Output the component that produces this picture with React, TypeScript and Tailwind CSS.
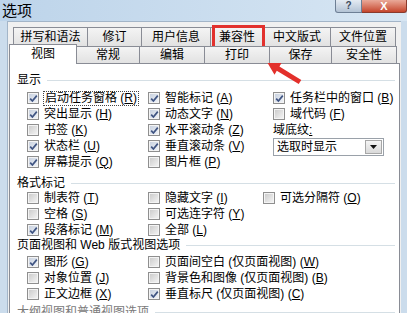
import clsx from "clsx";

interface Item {
  t: string;
  k: string;
  on: boolean;
  focus?: boolean;
}

function Box({ on }: { on: boolean }) {
  return (
    <span className="relative flex h-[12px] w-[12px] shrink-0 items-center justify-center border border-[#8f8f8f] bg-[#f4f4f4]">
      <span
        className={clsx(
          "h-[8px] w-[8px] bg-gradient-to-br",
          on ? "from-[#c9d2e0] to-[#eef1f6]" : "from-[#cdcdcd] to-[#f2f2f2]"
        )}
      />
      {on && (
        <svg className="absolute left-[1px] top-[1px]" width="9" height="9" viewBox="0 0 9 9">
          <path d="M1.2 4.6 L3.4 7 L7.8 1.6" stroke="#3f5482" strokeWidth="1.7" fill="none" />
        </svg>
      )}
    </span>
  );
}

function Check({ item }: { item: Item }) {
  return (
    <div className="flex h-[16px] items-center gap-[5px] whitespace-nowrap">
      <Box on={item.on} />
      <span
        className={clsx(
          "leading-[13px]",
          item.focus && "-ml-px border border-dotted border-[#444] px-[1px]"
        )}
      >
        {item.t} (<u>{item.k}</u>)
      </span>
    </div>
  );
}

function Header({ title, className }: { title: React.ReactNode; className?: string }) {
  return (
    <div className={clsx("flex h-[14px] items-center pl-[7px] pr-[4px] whitespace-nowrap", className)}>
      <span>{title}</span>
      <span className="ml-[6px] h-px flex-1 bg-[#d5dfe5]" />
    </div>
  );
}

const row1 = [
  { t: "拼写和语法", w: "w-[75px]" },
  { t: "修订", w: "w-[55px]" },
  { t: "用户信息", w: "w-[70px]" },
  { t: "兼容性", w: "w-[54px]" },
  { t: "中文版式", w: "w-[68px]" },
  { t: "文件位置", w: "w-[66px]" },
];

const row2 = [
  { t: "常规", w: "w-[64px]" },
  { t: "编辑", w: "w-[66px]" },
  { t: "打印", w: "w-[66px]" },
  { t: "保存", w: "w-[63px]" },
  { t: "安全性", w: "w-[66px]" },
];

const show1: Item[] = [
  { t: "启动任务窗格", k: "R", on: true, focus: true },
  { t: "突出显示", k: "H", on: true },
  { t: "书签", k: "K", on: false },
  { t: "状态栏", k: "U", on: true },
  { t: "屏幕提示", k: "Q", on: true },
];
const show2: Item[] = [
  { t: "智能标记", k: "A", on: true },
  { t: "动态文字", k: "N", on: true },
  { t: "水平滚动条", k: "Z", on: true },
  { t: "垂直滚动条", k: "V", on: true },
  { t: "图片框", k: "P", on: false },
];
const show3: Item[] = [
  { t: "任务栏中的窗口", k: "B", on: true },
  { t: "域代码", k: "F", on: false },
];

const fmt1: Item[] = [
  { t: "制表符", k: "T", on: false },
  { t: "空格", k: "S", on: false },
  { t: "段落标记", k: "M", on: true },
];
const fmt2: Item[] = [
  { t: "隐藏文字", k: "I", on: false },
  { t: "可选连字符", k: "Y", on: false },
  { t: "全部", k: "L", on: false },
];
const fmt3: Item[] = [{ t: "可选分隔符", k: "O", on: false }];

const page1: Item[] = [
  { t: "图形", k: "G", on: true },
  { t: "对象位置", k: "J", on: false },
  { t: "正文边框", k: "X", on: false },
];
const page2: Item[] = [
  { t: "页面间空白 (仅页面视图)", k: "W", on: false },
  { t: "背景色和图像 (仅页面视图)", k: "B", on: false },
  { t: "垂直标尺 (仅页面视图)", k: "C", on: true },
];

export default function App() {
  return (
    <div className="relative flex h-[313px] w-[407px] flex-col overflow-hidden bg-[#cbdcec] font-['Liberation_Sans','Noto_Sans_CJK_SC',sans-serif] text-[12px] text-black">
      {/* Title bar */}
      <div className="flex h-[21px] shrink-0 bg-gradient-to-r from-[#bdd4ea] to-[#d7e6f3]">
        <span className="self-center pl-[2px] text-[15px] leading-none">选项</span>
        <div className="ml-auto flex self-start">
          <div className="flex h-[13px] w-[27px] items-center justify-center rounded-bl-[3px] border border-t-0 border-[#6d7f95] bg-gradient-to-b from-[#e4ebf3] to-[#b3c3d5] text-[10px] font-bold leading-none text-[#3b4a5c]">
            ?
          </div>
          <div className="flex h-[13px] w-[45px] items-center justify-center rounded-br-[3px] border border-l-0 border-t-0 border-[#8a3a2c] bg-gradient-to-b from-[#e9a999] to-[#c4442b] text-[11px] font-bold leading-none text-white">
            X
          </div>
        </div>
      </div>

      {/* Client area */}
      <div className="ml-[7px] flex w-[394px] flex-1 flex-col border-l border-t border-[#a3b5c8] bg-[#f0f0f0] pt-[5px]">
        {/* Back row of tabs */}
        <div className="ml-[5px] flex h-[19px]">
          {row1.map((tab) => (
            <div
              key={tab.t}
              className={clsx(
                tab.w,
                "-mr-px flex items-center justify-center border border-b-0 border-[#898c95] bg-gradient-to-b from-[#f4f4f4] to-[#e2e2e2] pb-[1px] text-[12px]"
              )}
            >
              {tab.t}
            </div>
          ))}
        </div>

        {/* Front row of tabs */}
        <div className="relative z-10 ml-[1px] flex h-[17px]">
          <div className="-mt-[2px] flex h-[20px] w-[68px] items-center justify-center border border-b-0 border-[#898c95] bg-white pb-[1px]">
            视图
          </div>
          {row2.map((tab) => (
            <div
              key={tab.t}
              className={clsx(
                tab.w,
                "-ml-px flex h-[17px] items-center justify-center border border-b-0 border-[#898c95] bg-gradient-to-b from-[#f4f4f4] to-[#e2e2e2]"
              )}
            >
              {tab.t}
            </div>
          ))}
        </div>

        {/* Panel */}
        <div className="ml-[1px] w-[391px] flex-1 border border-[#898c95] bg-white pt-[9px]">
          <Header title="显示" />
          <div className="mt-[3px] flex pl-[17px]">
            <div className="flex w-[121px] flex-col">
              {show1.map((i) => (
                <Check key={i.t} item={i} />
              ))}
            </div>
            <div className="flex w-[125px] flex-col">
              {show2.map((i) => (
                <Check key={i.t} item={i} />
              ))}
            </div>
            <div className="flex flex-col">
              {show3.map((i) => (
                <Check key={i.t} item={i} />
              ))}
              <div className="flex h-[16px] items-center leading-[13px]">
                域底纹<u>:</u>
              </div>
              <div className="flex h-[18px] w-[111px] items-center border border-[#9aa1a9] bg-white">
                <span className="flex-1 pl-[3px] leading-none">选取时显示</span>
                <span className="mr-px flex h-[14px] w-[17px] items-center justify-center border border-[#a7a7a7] bg-gradient-to-b from-[#f5f5f5] to-[#d9d9d9]">
                  <svg width="7" height="4" viewBox="0 0 7 4">
                    <path d="M0 0 H7 L3.5 4 Z" fill="#111" />
                  </svg>
                </span>
              </div>
            </div>
          </div>

          <Header title="格式标记" className="mt-[6px]" />
          <div className="flex pl-[17px]">
            <div className="flex w-[121px] flex-col">
              {fmt1.map((i) => (
                <Check key={i.t} item={i} />
              ))}
            </div>
            <div className="flex w-[115px] flex-col">
              {fmt2.map((i) => (
                <Check key={i.t} item={i} />
              ))}
            </div>
            <div className="flex flex-col">
              {fmt3.map((i) => (
                <Check key={i.t} item={i} />
              ))}
            </div>
          </div>

          <Header title="页面视图和 Web 版式视图选项" />
          <div className="mt-[2px] flex pl-[17px]">
            <div className="flex w-[121px] flex-col">
              {page1.map((i) => (
                <Check key={i.t} item={i} />
              ))}
            </div>
            <div className="flex flex-col">
              {page2.map((i) => (
                <Check key={i.t} item={i} />
              ))}
            </div>
          </div>

          <Header title="大纲视图和普通视图选项" className="mt-[3px] text-[#7a7a7a]" />
        </div>
      </div>

      {/* Annotation: red box around the 兼容性 tab */}
      <div className="absolute left-[212px] top-[25px] h-[25px] w-[53px] border-[3px] border-[#e2312d]" />

      {/* Annotation: red arrow */}
      <svg className="absolute left-[262px] top-[58px]" width="45" height="30" viewBox="0 0 45 30">
        <polygon
          points="5,4 19.7,4.7 17.4,8.6 39.3,21.9 36.7,26.1 14.8,12.8 12.5,16.7"
          fill="#e3302b"
        />
      </svg>
    </div>
  );
}
